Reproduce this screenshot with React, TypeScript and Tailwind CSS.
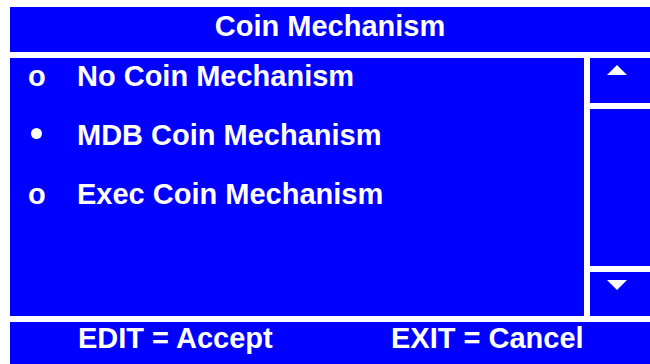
import React from 'react';

const options = [
  { label: 'No Coin Mechanism', selected: false },
  { label: 'MDB Coin Mechanism', selected: true },
  { label: 'Exec Coin Mechanism', selected: false },
];

function Arrow({ dir }: { dir: 'up' | 'down' }) {
  return (
    <svg width="20" height="10" viewBox="0 0 20 10" className="block">
      {dir === 'up' ? <polygon points="10,0 20,10 0,10" fill="white" /> : <polygon points="0,0 20,0 10,10" fill="white" />}
    </svg>
  );
}

export default function App() {
  return (
    <div
      className="w-[650px] h-[364px] bg-white pl-[10px] pt-[7px] flex flex-col gap-[6px] overflow-hidden text-white font-bold"
      style={{ fontFamily: '"Liberation Sans", Arial, sans-serif' }}
    >
      {/* title */}
      <div className="h-[45px] bg-[#0000ff] text-center text-[29px] leading-[29px] pt-[5px]">Coin Mechanism</div>

      {/* list + scroll */}
      <div className="h-[258px] flex gap-[6px]">
        <div className="flex-1 bg-[#0000ff] pt-[4px]">
          {options.map((o) => (
            <div key={o.label} className="h-[59px] flex text-[29px] leading-[29px]">
              <span className="w-[67px] pl-[18px]">
                {o.selected ? (
                  <span className="block mt-[7px] ml-[3px] w-[11px] h-[11px] rounded-full bg-white" />
                ) : (
                  'o'
                )}
              </span>
              <span>{o.label}</span>
            </div>
          ))}
        </div>
        <div className="w-[60px] flex flex-col gap-[6px]">
          <div className="h-[45px] bg-[#0000ff] pl-[17px] pt-[7px]">
            <Arrow dir="up" />
          </div>
          <div className="flex-1 bg-[#0000ff]" />
          <div className="h-[44px] bg-[#0000ff] pl-[17px] pt-[8px]">
            <Arrow dir="down" />
          </div>
        </div>
      </div>

      {/* footer */}
      <div className="h-[42px] bg-[#0000ff] flex text-[29px] leading-[29px] pt-[2px]">
        <span className="pl-[68px] w-[381px]">EDIT = Accept</span>
        <span>EXIT = Cancel</span>
      </div>
    </div>
  );
}
